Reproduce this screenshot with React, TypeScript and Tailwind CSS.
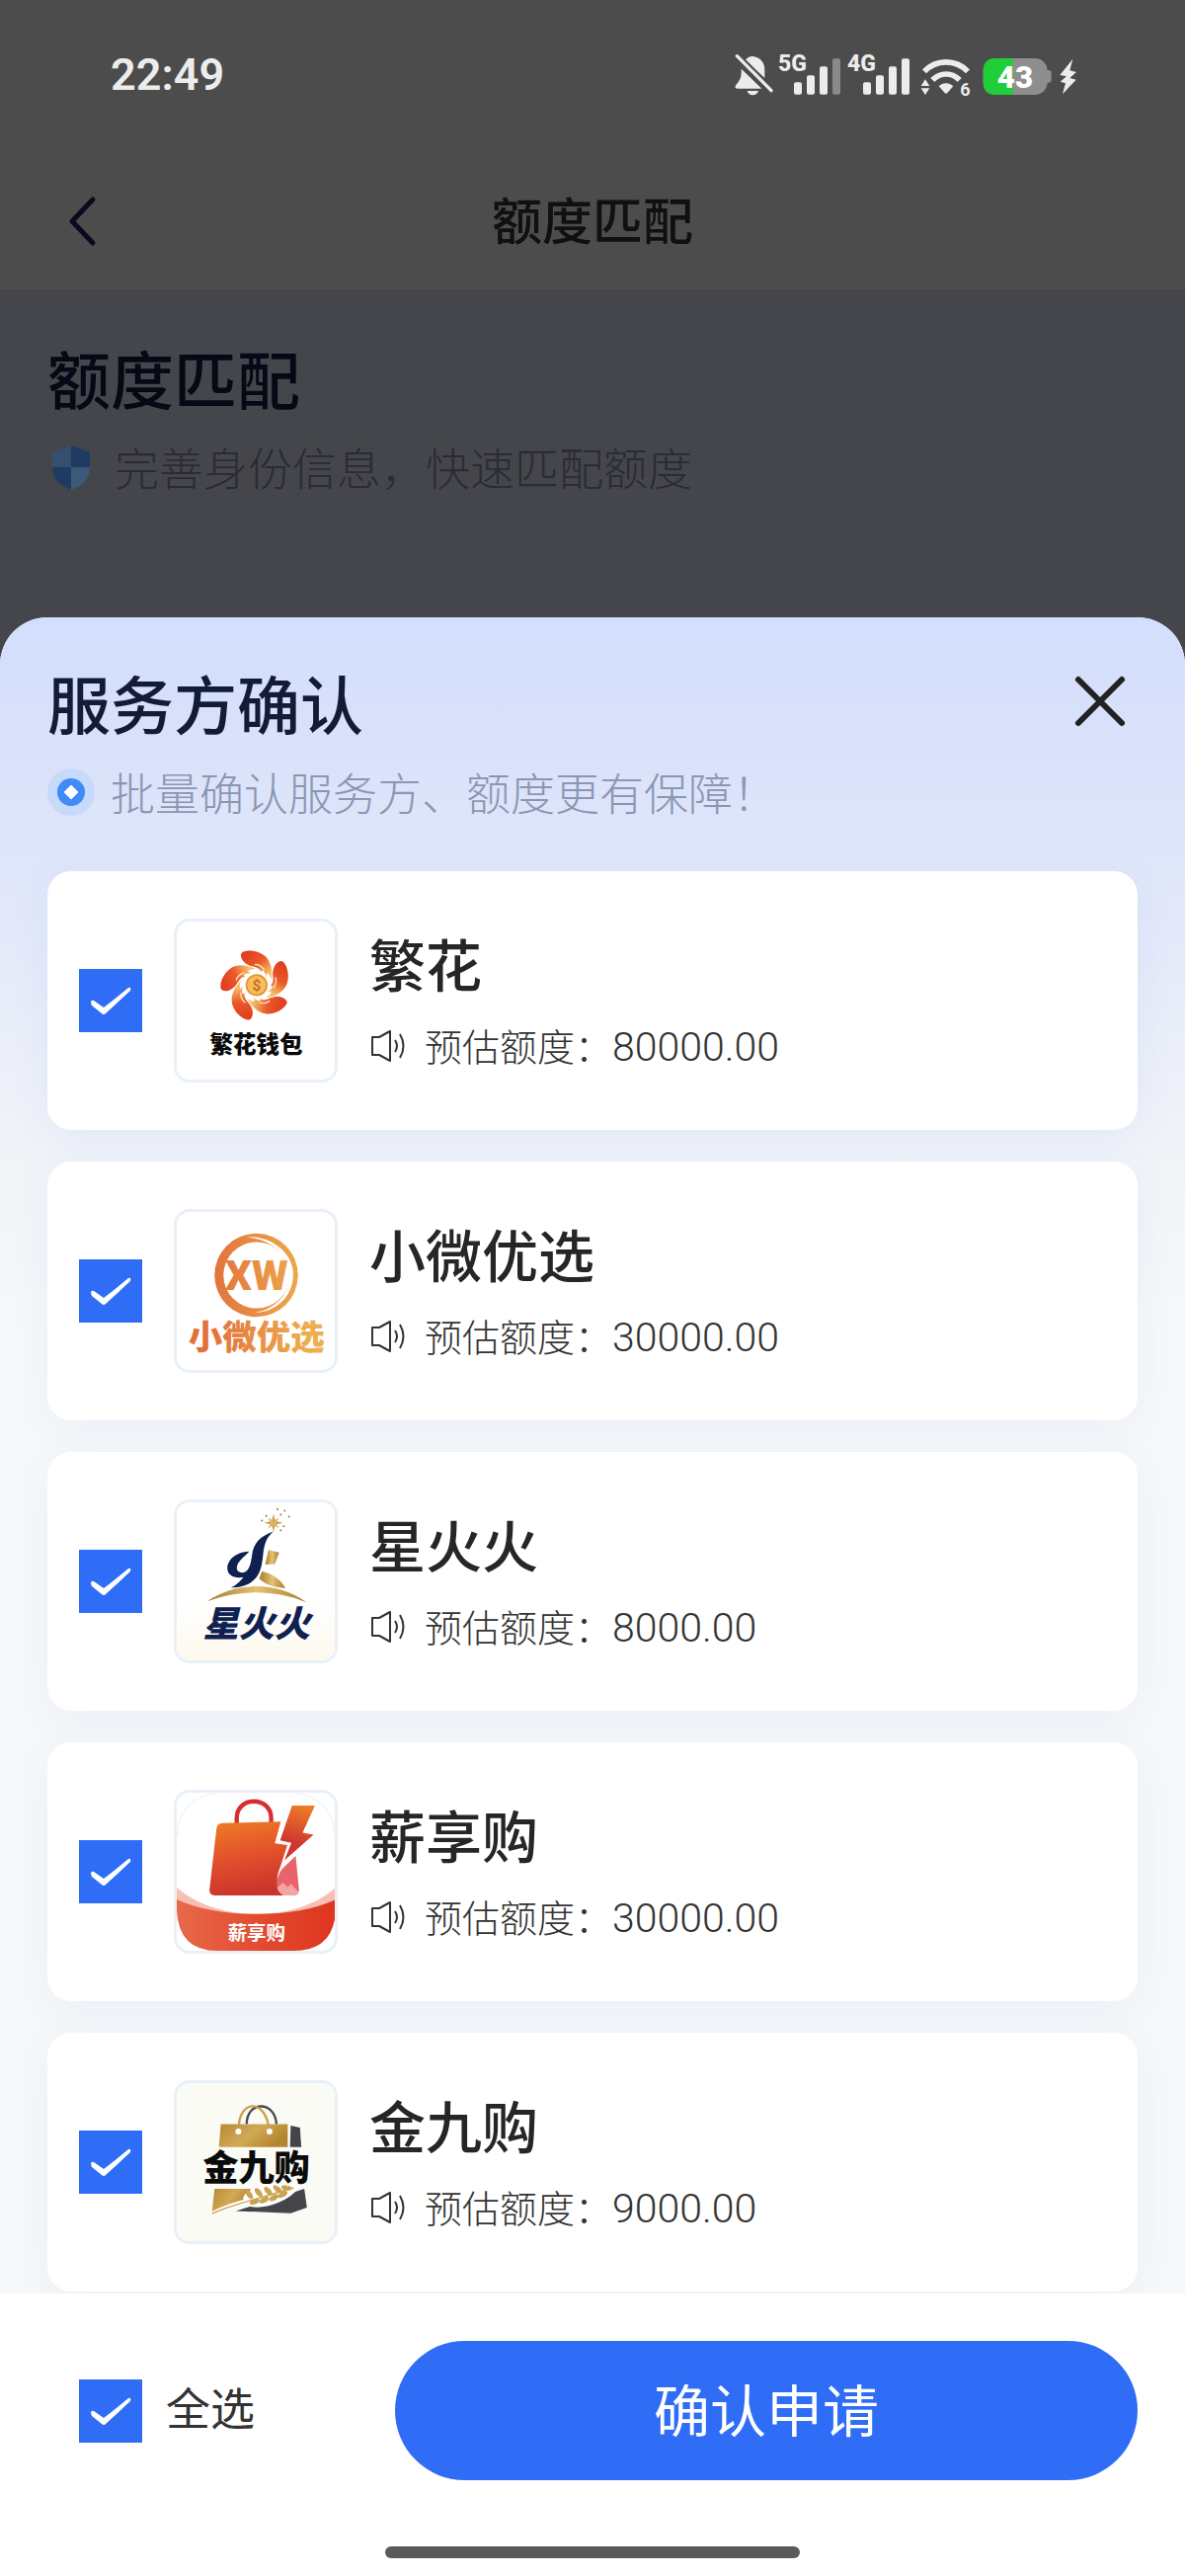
import React, { useState } from 'react';

type Provider = {
    id: string;
    name: string;
    amount: string;
    Logo: () => React.JSX.Element;
};

const LOGO_FONT = '"Noto Sans CJK SC", sans-serif';

/* ---------- status bar ---------- */

function BellOff() {
    return (
        <svg className="w-11 h-[46px]" viewBox="72 68 132 138" fill="#ececec" aria-hidden="true">
            <path d="M104 92 C112 81 124 78 136 82 C154 88 163 102 163 122 V146 Z" />
            <path d="M92 118 L154 178 H80 C73 178 72 172 76 167 C86 156 91 146 92 134 Z" />
            <path d="M110 185 H144 C140 202 114 202 110 185 Z" />
            <path d="M79 79 L183 184" stroke="#4c4c4c" strokeWidth="22" />
            <path d="M79 79 L183 184" stroke="#ececec" strokeWidth="10" strokeLinecap="round" />
        </svg>
    );
}

function Signal({ label, bars }: { label: string; bars: number }) {
    const heights = [37, 58, 85, 109];
    return (
        <svg className="w-[70px] h-[46px] overflow-visible" viewBox="204 68 210 138" role="img" aria-label={label}>
            <text x="204" y="124" fontSize="69" fontWeight="800" fontFamily="Roboto, sans-serif" fill="#ececec">
                {label}
            </text>
            {heights.map((h, i) => (
                <rect
                    key={h}
                    x={252 + i * 39}
                    y={196 - h}
                    width="24"
                    height={h}
                    rx="6"
                    fill={i < bars ? '#ececec' : '#8a8a8a'}
                />
            ))}
        </svg>
    );
}

function Wifi() {
    return (
        <svg className="w-[61px] h-[46px] overflow-visible" viewBox="624 68 183 138" fill="none" aria-hidden="true">
            <path d="M648 126 C684 88 744 88 780 126" stroke="#ececec" strokeWidth="17" />
            <path d="M673 152 C697 128 732 128 755 152" stroke="#ececec" strokeWidth="17" />
            <path d="M692 171 C704 159 724 159 736 171 L718 191 Q714 195 710 191 Z" fill="#ececec" />
            <path d="M638 170 L651 150 L664 170 Z M638 177 L651 197 L664 177 Z" fill="#ececec" />
            <text x="757" y="200" fontSize="54" fontWeight="700" fontFamily="Roboto, sans-serif" fill="#ececec">6</text>
        </svg>
    );
}

function Battery() {
    return (
        <svg className="w-20 h-[46px]" viewBox="807 68 240 138" role="img" aria-label="43%">
            <path d="M1018 122 h7 q9 0 9 9 v20 q0 9 -9 9 h-7 Z" fill="#8e8e8e" />
            <rect x="827" y="86" width="195" height="111" rx="38" fill="#8e8e8e" />
            <path d="M917 86 H865 Q827 86 827 124 V159 Q827 197 865 197 H917 Z" fill="#20ce38" />
            <text x="924" y="175" textAnchor="middle" fontSize="94" fontWeight="900" fontFamily="Roboto, sans-serif" fill="#fff">
                43
            </text>
        </svg>
    );
}

function Bolt() {
    return (
        <svg className="w-[22px] h-[46px]" viewBox="1047 68 66 138" fill="#ececec" aria-hidden="true">
            <path d="M1099 88 L1060 137 L1080 141 L1061 157 L1077 162 L1068 195 L1109 151 L1090 146 L1110 128 L1090 123 Z" />
        </svg>
    );
}

/* ---------- provider logos ---------- */

function FanhuaLogo() {
    return (
        <svg className="w-full h-full" viewBox="27 40 477 477" aria-hidden="true">
            <defs>
                <linearGradient id="petal" x1="0" y1="0" x2="1" y2="1">
                    <stop offset="0.15" stopColor="#e2401f" />
                    <stop offset="0.5" stopColor="#ea5a2a" />
                    <stop offset="0.85" stopColor="#f6c36a" />
                </linearGradient>
            </defs>
            {[0, 72, 144, 216, 288].map((deg) => (
                <g key={deg} transform={`rotate(${deg} 267 232)`}>
                    <path
                        d="M221 138 C226 124 270 124 292 143 C312 160 317 188 313 216 C309 204 305 198 299 195 L297 206 C294 196 291 190 285 186 L282 192 C277 182 268 178 254 175 C236 171 218 156 221 138 Z"
                        fill="url(#petal)"
                    />
                    <path d="M262 170 C276 168 284 176 292 186" stroke="#fbe3b0" strokeWidth="4" fill="none" />
                </g>
            ))}
            <circle cx="268" cy="232" r="33" fill="#e2932f" />
            <circle cx="268" cy="232" r="28" fill="#f7bf5b" />
            <text x="268" y="248" textAnchor="middle" fontSize="46" fontWeight="700" fontFamily="Roboto, sans-serif" fill="#d2691e">$</text>
            <text x="267" y="437" textAnchor="middle" fontSize="70" fontWeight="900" fontFamily={LOGO_FONT} fill="#0a0a0a">
                繁花钱包
            </text>
        </svg>
    );
}

function XiaoweiLogo() {
    return (
        <svg className="w-full h-full" viewBox="27 36 477 477" aria-hidden="true">
            <defs>
                <linearGradient id="xw" gradientUnits="userSpaceOnUse" x1="60" y1="0" x2="475" y2="0">
                    <stop offset="0.15" stopColor="#e2703a" />
                    <stop offset="0.9" stopColor="#eeb04f" />
                </linearGradient>
            </defs>
            <circle cx="267" cy="227" r="126" fill="url(#xw)" />
            <path d="M238 112 C300 105 372 150 378 215 C384 285 330 340 262 340 C320 330 366 290 367 228 C366 165 310 116 238 112 Z" fill="#fff" />
            <circle cx="268" cy="227" r="100" fill="#fff" />
            <text
                x="268"
                y="273"
                textAnchor="middle"
                fontSize="126"
                fontWeight="900"
                fontFamily="Roboto, sans-serif"
                fill="url(#xw)"
            >
                XW
            </text>
            <text x="268" y="450" textAnchor="middle" fontSize="103" fontWeight="900" fontFamily={LOGO_FONT} fill="url(#xw)">
                小微优选
            </text>
        </svg>
    );
}

function XinghuoLogo() {
    return (
        <svg className="w-full h-full" viewBox="27 36 477 477" aria-hidden="true">
            <defs>
                <linearGradient id="gold" x1="0" y1="0" x2="1" y2="0">
                    <stop offset="0" stopColor="#a67c2a" />
                    <stop offset="0.5" stopColor="#e3c374" />
                    <stop offset="1" stopColor="#a67c2a" />
                </linearGradient>
                <linearGradient id="cream" x1="0" y1="0" x2="0" y2="1">
                    <stop offset="0.6" stopColor="#fff" />
                    <stop offset="1" stopColor="#fdf9ee" />
                </linearGradient>
            </defs>
            <rect x="27" y="36" width="477" height="477" fill="url(#cream)" />
            <path d="M319 70 L324 93 L348 98 L324 103 L319 126 L314 103 L290 98 L314 93 Z" fill="#c99b3f" />
            <path d="M303 82 L319 92 L335 82 L327 98 L335 114 L319 105 L303 114 L311 98 Z" fill="#d9b565" />
            {[[331, 57], [353, 61], [297, 77], [366, 79], [284, 91], [350, 108], [341, 120], [341, 73]].map(([x, y]) => (
                <circle key={`${x}-${y}`} cx={x} cy={y} r="3" fill="#8d7a55" />
            ))}
            {/* flame stroke */}
            <path
                d="M319 124 C280 138 258 158 254 196 C250 224 246 240 230 248 C208 250 204 236 212 220 C222 204 236 196 246 184 C222 184 190 196 181 224 C174 250 194 268 228 262 C216 278 206 286 190 294 C230 292 262 280 276 248 C288 222 286 192 291 172 C296 150 304 136 319 124 Z"
                fill="#0f2150"
            />
            <path d="M304 180 L336 187 L323 222 L294 224 Z" fill="url(#gold)" />
            <path d="M284 244 C310 250 338 264 355 295 C326 292 298 288 276 266 Z" fill="url(#gold)" />
            <path d="M119 335 C200 276 330 272 418 338 C330 300 210 298 119 335 Z" fill="url(#gold)" />
            <text x="268" y="441" textAnchor="middle" fontSize="108" fontWeight="900" fontStyle="italic" fontFamily={LOGO_FONT} fill="#0f2150">
                星火火
            </text>
        </svg>
    );
}

function XinxiangLogo() {
    return (
        <svg className="w-full h-full" viewBox="27 47 477 477" aria-hidden="true">
            <defs>
                <linearGradient id="bag" x1="0.2" y1="0" x2="0.4" y2="1">
                    <stop offset="0" stopColor="#ee7a25" />
                    <stop offset="0.5" stopColor="#e2502c" />
                    <stop offset="1" stopColor="#c9342b" />
                </linearGradient>
                <linearGradient id="flash" x1="0.6" y1="0" x2="0.4" y2="1">
                    <stop offset="0" stopColor="#ee7a25" />
                    <stop offset="0.7" stopColor="#cf3530" />
                </linearGradient>
                <linearGradient id="band" x1="0" y1="0" x2="1" y2="0">
                    <stop offset="0" stopColor="#e8694a" />
                    <stop offset="0.6" stopColor="#e2472c" />
                    <stop offset="1" stopColor="#de3520" />
                </linearGradient>
            </defs>
            <path d="M28 180 Q32 62 145 49 M386 49 Q500 62 504 180" stroke="#edf2f8" strokeWidth="3" fill="none" />
            <path d="M27 333 C150 440 390 440 507 333 V400 Q502 524 380 524 H150 Q32 524 27 400 Z" fill="#f7bfb4" />
            <path d="M27 369 C150 428 390 428 507 369 V400 Q502 524 380 524 H150 Q32 524 27 400 Z" fill="url(#band)" />
            <path d="M208 140 V124 C208 56 312 56 312 124 V140" stroke="#d5302f" strokeWidth="13" fill="none" />
            <path
                d="M164 139 L341 134 L323 200 L361 205 L338 276 C326 300 326 340 356 357 H142 Q124 355 126 338 L147 155 Q149 140 164 139 Z"
                fill="url(#bag)"
            />
            <path d="M386 238 L396 338 Q397 357 380 357 H350 C324 344 322 308 346 276 Z" fill="#e9646a" />
            <path d="M330 334 L347 318 L362 332 L372 322 L394 346 Q390 357 380 357 H350 Q334 350 330 334 Z" fill="#f4a3a3" />
            <path d="M375 86 H444 L407 168 L440 174 L352 251 L373 198 L339 191 Z" fill="url(#flash)" />
            <text x="268" y="492" textAnchor="middle" fontSize="58" fontWeight="700" fontFamily={LOGO_FONT} fill="#fff">
                薪享购
            </text>
        </svg>
    );
}

function JinjiuLogo() {
    const grains = [
        [246, 380, 55], [274, 374, 50], [303, 370, 45], [331, 364, 40], [358, 360, 10],
        [262, 402, -20], [291, 397, -25], [320, 390, -30], [347, 380, -30]
    ];
    return (
        <svg className="w-full h-full" viewBox="27 44 477 477" aria-hidden="true">
            <defs>
                <linearGradient id="goldBag" x1="0" y1="0" x2="1" y2="0.4">
                    <stop offset="0" stopColor="#b88a35" />
                    <stop offset="0.55" stopColor="#d1a955" />
                    <stop offset="1" stopColor="#b58630" />
                </linearGradient>
            </defs>
            <rect x="27" y="44" width="477" height="477" fill="#fbfbf6" />
            <path d="M238 168 C238 96 324 96 328 168" stroke="#47474b" strokeWidth="7" fill="none" />
            <path d="M214 190 C210 88 300 88 306 190" stroke="#c9a04b" strokeWidth="7" fill="none" />
            <path d="M160 168 H362 V237 H154 Z" fill="url(#goldBag)" />
            <path d="M371 172 L399 178 L403 237 H369 Z" fill="#454549" />
            <circle cx="213" cy="190" r="9" fill="#fff" />
            <circle cx="307" cy="190" r="9" fill="#fff" />
            <path d="M141 363 H250 L240 400 L133 437 Z" fill="url(#goldBag)" />
            <path d="M205 430 L412 363 L420 420 L371 437 Z" fill="#454549" />
            <path d="M134 438 C180 416 220 404 250 398" stroke="#fff" strokeWidth="14" fill="none" />
            <path d="M232 392 C236 366 300 356 392 354 C370 392 300 420 250 412 Z" fill="#fff" stroke="#fff" strokeWidth="10" strokeLinejoin="round" />
            <path d="M134 438 C180 414 250 400 380 360" stroke="#c9a04b" strokeWidth="4" fill="none" />
            {grains.map(([x, y, rot]) => (
                <ellipse key={`${x}-${y}`} cx={x} cy={y} rx="16" ry="8" fill="#c9a352" transform={`rotate(${rot} ${x} ${y})`} />
            ))}
            <text
                x="267"
                y="338"
                textAnchor="middle"
                fontSize="108"
                fontWeight="900"
                fontFamily={LOGO_FONT}
                fill="#0b0b0b"
                stroke="#fbfbf6"
                strokeWidth="12"
                paintOrder="stroke"
            >
                金九购
            </text>
        </svg>
    );
}

const PROVIDERS: Provider[] = [
    { id: 'fanhua', name: '繁花', amount: '80000.00', Logo: FanhuaLogo },
    { id: 'xiaowei', name: '小微优选', amount: '30000.00', Logo: XiaoweiLogo },
    { id: 'xinghuo', name: '星火火', amount: '8000.00', Logo: XinghuoLogo },
    { id: 'xinxiang', name: '薪享购', amount: '30000.00', Logo: XinxiangLogo },
    { id: 'jinjiu', name: '金九购', amount: '9000.00', Logo: JinjiuLogo }
];

/* ---------- small parts ---------- */

function Checkbox({ id, checked, onChange }: { id: string; checked: boolean; onChange: () => void }) {
    return (
        <span className="grid size-16 shrink-0">
            <input
                id={id}
                type="checkbox"
                checked={checked}
                onChange={onChange}
                className="peer col-start-1 row-start-1 size-16 appearance-none border-2 border-gray-300 bg-white checked:border-[#2f6df6] checked:bg-[#2f6df6]"
            />
            <svg
                className="pointer-events-none invisible col-start-1 row-start-1 size-16 peer-checked:visible"
                viewBox="0 0 64 64"
                fill="#fff"
                aria-hidden="true"
            >
                <path d="M12 34 Q12 31 15 32 L25 39 C34 32 42 26 50 19 Q53 18 52 22 C43 30 35 38 27 45 Q25 47 23 45 L13 37 Z" />
            </svg>
        </span>
    );
}

function Speaker() {
    return (
        <svg className="h-8 w-9 shrink-0" viewBox="0 0 36 32" fill="none" stroke="#333" strokeWidth="2" strokeLinejoin="round" aria-hidden="true">
            <path d="M3 7 H10 L21 1 V31 L10 25 H3 Z" />
            <path d="M26 10 Q30 16 26 22" />
            <path d="M31 4 Q38 16 31 28" />
        </svg>
    );
}

function Shield() {
    return (
        <svg className="h-12 w-12 shrink-0" viewBox="0 0 48 48" aria-hidden="true">
            <path d="M24 2 L43 9 V24 H24 Z" fill="#1f3a63" />
            <path d="M24 2 L5 9 V24 H24 Z" fill="#34506f" />
            <path d="M5 24 H24 V47 C12 42 5 36 5 24 Z" fill="#1f3a63" />
            <path d="M43 24 H24 V47 C36 42 43 36 43 24 Z" fill="#3a5a78" />
        </svg>
    );
}

function Badge() {
    return (
        <svg className="h-12 w-12 shrink-0" viewBox="0 0 48 48" aria-hidden="true">
            <circle cx="24" cy="24" r="24" fill="#c7dafc" />
            <circle cx="24" cy="24" r="14" fill="#3f8cf7" />
            <path d="M24 17 L31 24 L24 31 L17 24 Z" fill="#fff" stroke="#fff" strokeLinejoin="round" />
        </svg>
    );
}

export default function App() {
    const [selected, setSelected] = useState<string[]>(PROVIDERS.map((p) => p.id));
    const allSelected = selected.length === PROVIDERS.length;

    const toggle = (id: string) => {
        setSelected((s) => (s.includes(id) ? s.filter((x) => x !== id) : [...s, id]));
    };

    const toggleAll = () => setSelected(allSelected ? [] : PROVIDERS.map((p) => p.id));

    return (
        <div className="flex min-h-screen flex-col bg-[#45464b] font-['Noto_Sans_CJK_SC',sans-serif]">
            <header className="bg-[#4c4c4c]">
                <div className="flex h-[152px] items-center justify-between pr-[109px] pl-28">
                    <time className="font-[Roboto,sans-serif] text-[45px] font-semibold text-[#ececec]">22:49</time>
                    <div className="flex">
                        <BellOff />
                        <Signal label="5G" bars={3} />
                        <Signal label="4G" bars={4} />
                        <Wifi />
                        <Battery />
                        <Bolt />
                    </div>
                </div>
                <div className="grid h-[141px] grid-cols-[1fr_auto_1fr] items-center px-12">
                    <button type="button" aria-label="返回" className="size-16 justify-self-start">
                        <svg viewBox="0 0 64 64" fill="none" stroke="#0a0a1c" strokeWidth="5" strokeLinecap="round" strokeLinejoin="round">
                            <path d="M46 11 L25 33 L46 55" />
                        </svg>
                    </button>
                    <h1 className="pb-1 text-[51px] leading-[64px] font-medium text-[#101010]">额度匹配</h1>
                </div>
            </header>

            <section className="px-12 pt-12 pb-[120px]">
                <h2 className="text-[64px] leading-[80px] font-medium text-[#070815]">额度匹配</h2>
                <p className="mt-5 flex items-center gap-5 text-[45px] leading-[64px] font-light text-[#2a2b33]">
                    <Shield />
                    完善身份信息，快速匹配额度
                </p>
            </section>

            <main className="flex flex-1 flex-col overflow-hidden rounded-t-[48px] bg-[#f7f8f9]">
                <div className="flex-1 bg-[linear-gradient(180deg,#d1dffe_0px,#d6dffb_60px,#e0e7fa_260px,#f1f3f8_540px,#f7f8f9_720px)] px-12 pt-[45px]">
                    <div className="flex items-start justify-between">
                        <h2 className="text-[64px] leading-[80px] font-medium text-[#131c36]">服务方确认</h2>
                        <button type="button" aria-label="关闭" className="size-[76px]">
                            <svg viewBox="0 0 76 76" fill="none" stroke="#222" strokeWidth="6" strokeLinecap="round">
                                <path d="M16 18 L60 62 M60 18 L16 62" />
                            </svg>
                        </button>
                    </div>
                    <p className="mt-5 flex items-center gap-4 text-[45px] leading-[64px] font-light text-[#8b96b2]">
                        <Badge />
                        批量确认服务方、额度更有保障！
                    </p>

                    <ul className="mt-12 flex flex-col gap-8">
                        {PROVIDERS.map(({ id, name, amount, Logo }) => (
                            <li
                                key={id}
                                className="flex items-center gap-8 rounded-3xl bg-white px-8 py-12 shadow-[0_8px_40px_rgba(60,120,220,0.07)]"
                            >
                                <Checkbox id={id} checked={selected.includes(id)} onChange={() => toggle(id)} />
                                <div className="size-[166px] shrink-0 overflow-hidden rounded-2xl border-3 border-[#e8f0fa]">
                                    <Logo />
                                </div>
                                <label htmlFor={id} className="flex flex-col gap-7">
                                    <span className="text-[57px] leading-[64px] font-medium text-[#262626]">{name}</span>
                                    <span className="flex items-center gap-5 text-[38px] leading-[48px] font-light text-[#333]">
                                        <Speaker />
                                        <span>
                                            预估额度：<span className="font-[Roboto,sans-serif] text-[41px]">{amount}</span>
                                        </span>
                                    </span>
                                </label>
                            </li>
                        ))}
                    </ul>
                </div>

                <footer className="bg-white">
                    <div className="flex items-center pt-12 pr-12 pl-20">
                        <Checkbox id="all" checked={allSelected} onChange={toggleAll} />
                        <label htmlFor="all" className="ml-6 pb-2 text-[45px] leading-[64px] text-[#333]">
                            全选
                        </label>
                        <button
                            type="button"
                            className="ml-[142px] h-[141px] flex-1 rounded-full bg-[#2f6df6] pb-2 text-[57px] leading-[64px] text-white"
                        >
                            确认申请
                        </button>
                    </div>
                    <div className="mx-auto mt-[67px] mb-[18px] h-3 w-[420px] rounded-full bg-[#5a5a5a]" />
                </footer>
            </main>
        </div>
    );
}
